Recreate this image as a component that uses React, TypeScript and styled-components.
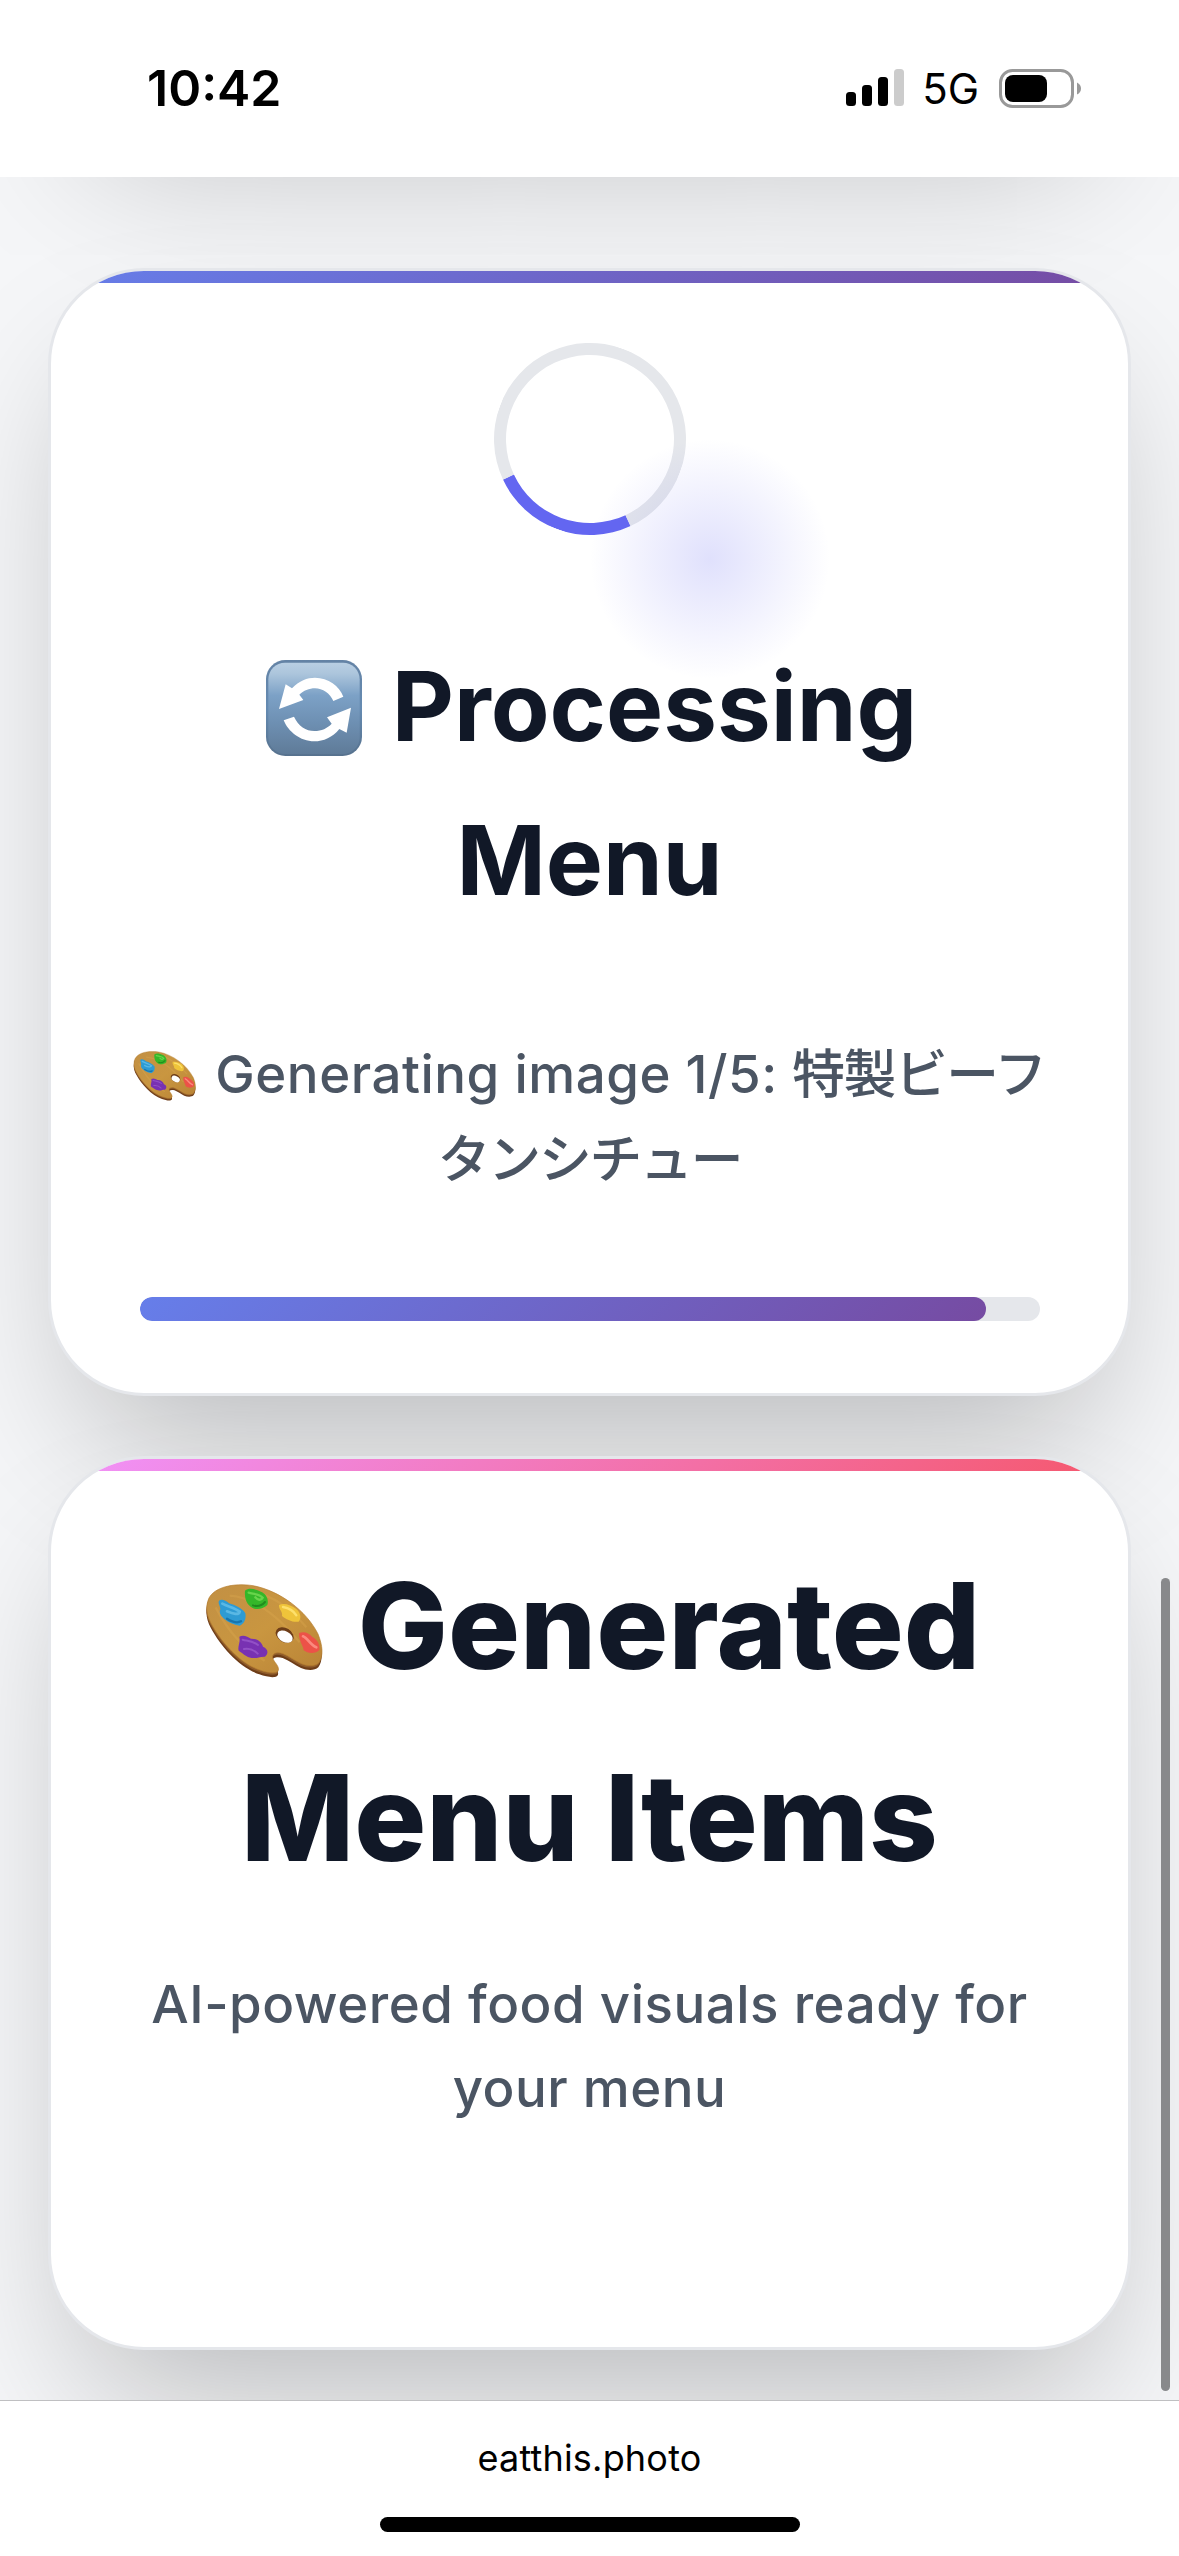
import React from "react";
import styled, { createGlobalStyle } from "styled-components";

const GlobalStyle = createGlobalStyle`
  * { box-sizing: border-box; }
  html, body { margin: 0; padding: 0; background: #fff; }
  body { font-family: Inter, "Noto Sans CJK JP", sans-serif; }
`;

const Screen = styled.div`
  width: 1179px;
  height: 2556px;
  display: flex;
  flex-direction: column;
  overflow: hidden;
  background: #fff;
`;

const StatusBar = styled.header`
  flex: none;
  height: 177px;
  display: flex;
  align-items: flex-start;
  justify-content: space-between;
  padding: 58px 97px 0 147px;
  color: #000;
`;

const Clock = styled.time`
  font-size: 50px;
  line-height: 60px;
  font-weight: 600;
`;

const StatusIcons = styled.div`
  display: flex;
  align-items: center;
  height: 60px;
`;

const Network = styled.span`
  margin: 2px 20px 0 18px;
  font-size: 42px;
  line-height: 60px;
  font-weight: 400;
`;

const Viewport = styled.main`
  position: relative;
  flex: none;
  height: 2223px;
  overflow: hidden;
  display: flex;
  flex-direction: column;
  padding: 0 48px;
  background: #f5f6f8;
`;

const Card = styled.section<{ $height: number; $gap: number; $accent?: string }>`
  position: relative;
  flex: none;
  height: ${(p) => p.$height}px;
  margin-bottom: ${(p) => p.$gap}px;
  padding: 72px;
  display: flex;
  flex-direction: column;
  align-items: center;
  overflow: hidden;
  background: #fff;
  border: 3px solid #e5e7eb;
  border-radius: 96px;
  box-shadow: 0 75px 150px -36px rgba(0, 0, 0, 0.25);

  &::before {
    content: "";
    position: absolute;
    top: 0;
    left: 0;
    right: 0;
    height: 12px;
    background: ${(p) => p.$accent ?? "none"};
  }
`;

const PreviousCard = styled(Card)`
  margin-top: -459px;
`;

const Spinner = styled.div`
  flex: none;
  width: 192px;
  height: 192px;
  border: 12px solid #e5e7eb;
  border-top-color: #6366f1;
  border-radius: 50%;
  transform: rotate(200deg);
`;

const Glow = styled.div`
  position: absolute;
  left: 539px;
  top: 168px;
  width: 240px;
  height: 240px;
  background: radial-gradient(circle closest-side, rgba(99, 102, 241, 0.2), rgba(99, 102, 241, 0));
`;

const Heading = styled.h2<{ $size: number; $weight: number; $top: number }>`
  margin: ${(p) => p.$top}px 0 0;
  font-size: ${(p) => p.$size}px;
  line-height: 1.6;
  font-weight: ${(p) => p.$weight};
  color: #111827;
`;

const Line = styled.span`
  display: flex;
  align-items: center;
  justify-content: center;
  white-space: pre;
`;

const Copy = styled.p<{ $top: number }>`
  margin: ${(p) => p.$top}px 0 0;
  font-size: 52.8px;
  line-height: 1.6;
  font-weight: 500;
  letter-spacing: 0.01em;
  color: #4b5563;
`;

const DishName = styled.span<{ $tracking: number }>`
  letter-spacing: ${(p) => p.$tracking}px;
`;

const Emoji = styled.svg<{ $w: number; $h: number; $left: number; $right: number; $drop: number }>`
  flex: none;
  width: ${(p) => p.$w}px;
  height: ${(p) => p.$h}px;
  margin: ${(p) => p.$drop}px ${(p) => p.$right}px 0 ${(p) => p.$left}px;
`;

const Track = styled.div`
  flex: none;
  width: 900px;
  height: 24px;
  margin-top: 96px;
  border-radius: 12px;
  overflow: hidden;
  background: #e5e7eb;
`;

const Fill = styled.div`
  height: 100%;
  border-radius: 12px;
  background: linear-gradient(135deg, #667eea 0%, #764ba2 100%);
`;

const ScrollThumb = styled.div`
  position: absolute;
  top: 1401px;
  right: 9px;
  width: 9px;
  height: 813px;
  border-radius: 5px;
  background: #88898b;
`;

const AddressBar = styled.footer`
  flex: 1;
  display: flex;
  flex-direction: column;
  align-items: center;
  border-top: 1px solid #bfbfc1;
  padding-top: 33px;
`;

const Address = styled.span`
  font-size: 36px;
  line-height: 48px;
  letter-spacing: 0.2px;
  color: #000;
`;

const HomeIndicator = styled.div`
  width: 420px;
  height: 15px;
  margin-top: 35px;
  border-radius: 8px;
  background: #000;
`;

type EmojiProps = { w: number; h: number; left?: number; right: number; drop?: number };

const BOARD =
  "M58 82C75 50 130 36 190 45C270 60 350 120 385 190C399 225 402 255 387 277C375 288 352 286 335 279C315 270 300 257 280 249C262 243 246 248 249 262C254 276 269 286 266 299C261 311 235 307 210 298C150 278 95 215 65 160C50 132 47 107 58 82Z";

function Palette({ w, h, left = 0, right, drop = 0 }: EmojiProps) {
  const id = `wood${w}`;
  return (
    <Emoji viewBox="46 40 354 282" preserveAspectRatio="none" $w={w} $h={h} $left={left} $right={right} $drop={drop} aria-hidden>
      <defs>
        <linearGradient id={id} x1="0" y1="0" x2="1" y2="1">
          <stop offset="0" stopColor="#c29044" />
          <stop offset="0.5" stopColor="#c99640" />
          <stop offset="1" stopColor="#b98336" />
        </linearGradient>
      </defs>
      <path d={BOARD} transform="translate(-1 13)" fill="#6e3d18" />
      <path d={BOARD} transform="translate(-1 6)" fill="#8f5c2a" />
      <path d={BOARD} fill={`url(#${id})`} stroke="#b57b2d" strokeWidth="2" />
      <path d="M78 110C120 190 160 230 225 270M120 75C190 80 260 130 330 215M180 60C250 75 300 110 350 170" fill="none" stroke="#dda850" strokeWidth="7" opacity="0.35" />
      <ellipse cx="285" cy="193" rx="29" ry="21" transform="rotate(32 285 193)" fill="#6e3d18" />
      <ellipse cx="286" cy="198" rx="25" ry="16" transform="rotate(28 286 198)" fill="#fff" />
      <path d="M88 90C95 84 108 88 118 98C135 103 158 112 167 128C170 142 165 160 150 165C132 163 116 155 105 146C95 138 87 128 92 116C92 105 84 98 88 90Z" fill="#2e9bd3" />
      <path d="M98 99C115 108 136 112 150 123C148 134 130 130 112 122" fill="none" stroke="#5ab8e4" strokeWidth="8" strokeLinecap="round" />
      <path d="M112 144C128 154 143 158 154 152" fill="none" stroke="#1775ad" strokeWidth="7" strokeLinecap="round" />
      <path d="M166 60C178 50 197 55 214 63C230 70 238 86 233 103C220 114 203 119 189 112C170 102 164 82 166 60Z" fill="#35b729" />
      <path d="M177 66C190 70 210 70 219 81C214 91 204 88 197 80" fill="none" stroke="#68d44b" strokeWidth="7" strokeLinecap="round" />
      <path d="M190 104C204 109 217 104 226 94" fill="none" stroke="#218b1e" strokeWidth="6" strokeLinecap="round" />
      <path d="M268 103C282 96 305 103 320 115C333 126 336 143 327 153C310 156 290 147 277 136C280 123 267 117 268 103Z" fill="#efc43a" />
      <path d="M280 109C298 112 312 121 320 134" fill="none" stroke="#fde06c" strokeWidth="7" strokeLinecap="round" />
      <path d="M149 198C160 191 174 197 184 204C202 203 215 213 220 228C236 235 237 248 226 258C211 257 202 264 186 262C169 259 162 249 147 240C143 228 153 216 149 198Z" fill="#7831b2" />
      <path d="M159 207C173 211 190 211 205 223M163 235C180 232 194 239 204 249" fill="none" stroke="#9250c6" strokeWidth="6" strokeLinecap="round" />
      <path d="M328 188C340 181 357 185 368 199C382 206 392 222 389 238C378 250 354 249 342 239C341 224 328 214 328 188Z" fill="#ec5248" />
      <path d="M340 197C354 202 362 224 380 230" fill="none" stroke="#fb8a7f" strokeWidth="8" strokeLinecap="round" />
    </Emoji>
  );
}

function Refresh({ w, h, left = 0, right, drop = 0 }: EmojiProps) {
  return (
    <Emoji viewBox="48 30 288 288" $w={w} $h={h} $left={left} $right={right} $drop={drop} aria-hidden>
      <defs>
        <linearGradient id="key" x1="0" y1="0" x2="0" y2="1">
          <stop offset="0" stopColor="#b9cfe3" />
          <stop offset="0.12" stopColor="#acc5dc" />
          <stop offset="0.36" stopColor="#7ca1c6" />
          <stop offset="0.65" stopColor="#6e90b3" />
          <stop offset="1" stopColor="#5f7b98" />
        </linearGradient>
        <linearGradient id="rim" x1="0" y1="0" x2="0" y2="1">
          <stop offset="0" stopColor="#6483a5" />
          <stop offset="0.5" stopColor="#658bb2" />
          <stop offset="1" stopColor="#57728e" />
        </linearGradient>
      </defs>
      <rect x="48" y="30" width="288" height="288" rx="58" fill="url(#rim)" />
      <rect x="55" y="38" width="274" height="274" rx="50" fill="url(#key)" />
      <g fill="#fff">
        <path d="M107 103L126 115C147 92 172 83 195 83C235 83 268 108 280 140L250 153C240 130 218 115 195 115C178 115 160 122 148 134L160 150L87 177Z" />
        <path d="M303 173L290 248L268 237C248 262 220 274 193 274C150 274 115 245 101 211L132 200C145 228 168 243 193 243C215 243 232 235 245 221L231 202Z" />
      </g>
    </Emoji>
  );
}

function Signal() {
  return (
    <svg width="58" height="38" viewBox="0 0 58 38" aria-hidden>
      <rect x="0" y="23" width="10" height="14" rx="3.5" />
      <rect x="16" y="16" width="10" height="21" rx="3.5" />
      <rect x="32" y="8" width="10" height="29" rx="3.5" />
      <rect x="48" y="0" width="10" height="37" rx="3.5" fill="#ccc" />
    </svg>
  );
}

function Battery() {
  return (
    <svg width="83" height="39" viewBox="0 0 83 39" aria-hidden>
      <rect x="1.5" y="1.5" width="72" height="36" rx="12" fill="none" stroke="#999" strokeWidth="3" />
      <rect x="6" y="6" width="42" height="27" rx="8" />
      <path d="M78 13.5Q82 15.5 82 19.5T78 25.5Z" fill="#999" />
    </svg>
  );
}

export default function App() {
  const progress = 94;
  return (
    <>
      <GlobalStyle />
      <Screen>
        <StatusBar>
          <Clock>10:42</Clock>
          <StatusIcons>
            <Signal />
            <Network>5G</Network>
            <Battery />
          </StatusIcons>
        </StatusBar>

        <Viewport>
          <PreviousCard $height={400} $gap={150} />

          <Card $height={1128} $gap={60} $accent="linear-gradient(135deg, #667eea 0%, #764ba2 100%)">
            <Spinner />
            <Heading $size={96} $weight={700} $top={95}>
              <Line>
                <Refresh w={96} h={96} left={4} right={30} drop={2} />
                Processing
              </Line>
              <Line>Menu</Line>
            </Heading>
            <Copy $top={95}>
              <Line>
                <Palette w={63} h={50} right={19} drop={4} />
                <span>
                  Generating image 1/5: <DishName $tracking={-1.5}>特製ビーフ</DishName>
                </span>
              </Line>
              <Line>
                <DishName $tracking={-2.2}>タンシチュー</DishName>
              </Line>
            </Copy>
            <Track>
              <Fill style={{ width: `${progress}%` }} />
            </Track>
            <Glow />
          </Card>

          <Card $height={894} $gap={50} $accent="linear-gradient(135deg, #f093fb 0%, #f5576c 100%)">
            <Heading $size={120} $weight={800} $top={-1}>
              <Line>
                <Palette w={118} h={94} left={6} right={35} drop={9} />
                Generated
              </Line>
              <Line>Menu Items</Line>
            </Heading>
            <Copy $top={48}>
              <Line>AI-powered food visuals ready for</Line>
              <Line>your menu</Line>
            </Copy>
          </Card>
          <ScrollThumb />
        </Viewport>

        <AddressBar>
          <Address>eatthis.photo</Address>
          <HomeIndicator />
        </AddressBar>
      </Screen>
    </>
  );
}
